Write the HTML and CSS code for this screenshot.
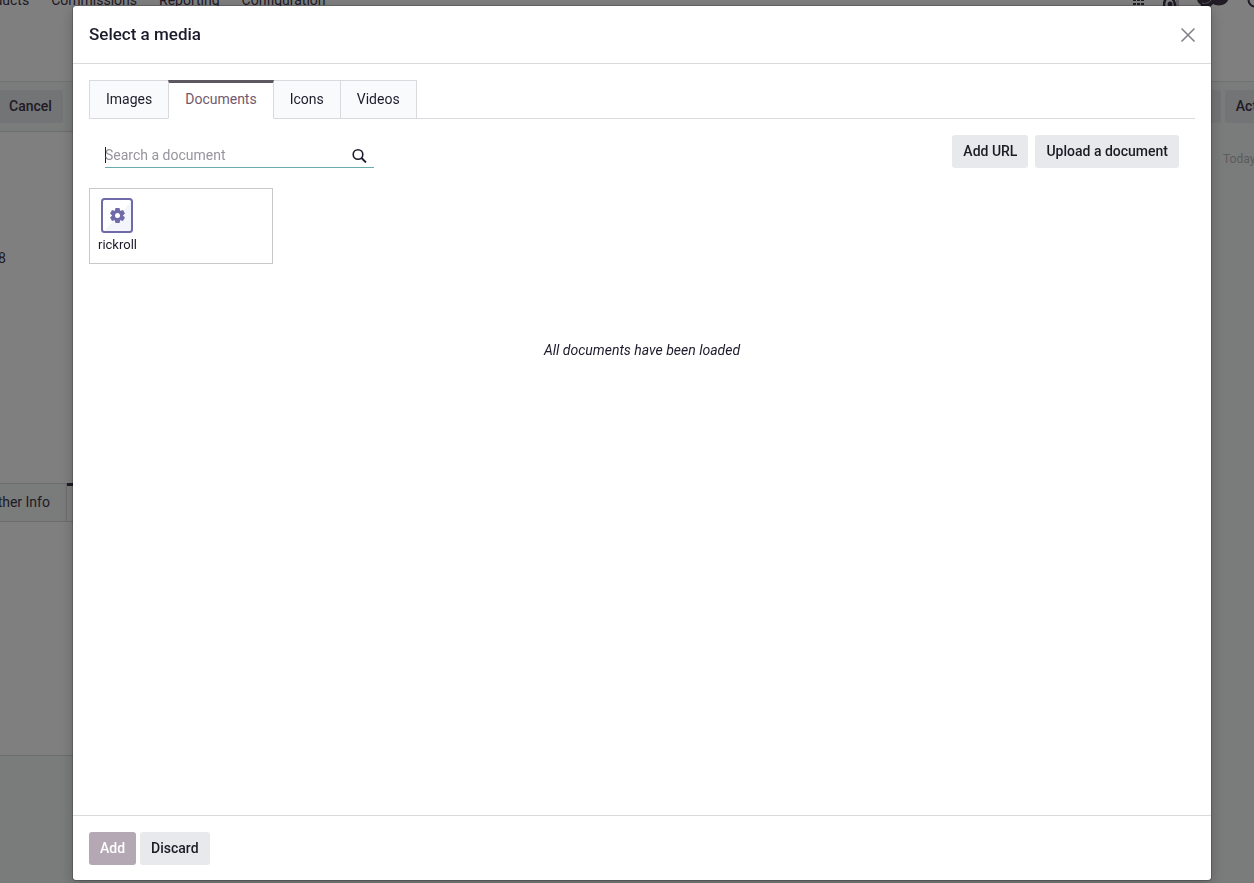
FILE: index.html
```html
<!DOCTYPE html>
<html lang="en">
<head>
  <meta charset="UTF-8">
  <meta name="viewport" content="width=device-width, initial-scale=1.0">
  <title>Select a media</title>
  <link rel="stylesheet" href="styles.css">
</head>
<body>

  <div class="page">
    <nav class="navbar">
      <a href="#">Products</a>
      <a href="#">Commissions</a>
      <a href="#">Reporting</a>
      <a href="#">Configuration</a>
      <div class="systray">
        <svg width="12" height="14" viewBox="0 0 12 14"><path d="M0 1h3v2H0zM4 1h3v2H4zM8 1h3v2H8zM0 4h3v2H0zM4 4h3v2H4zM8 4h3v2H8zM0 7h3v1H0zM4 7h3v1H4zM8 7h3v1H8zM0 10h3v2H0zM4 10h3v2H4zM8 10h3v2H8z"/></svg>
        <svg width="16" height="16" viewBox="0 0 16 16"><path d="M1 14c0-5 2-9 5-9s6 4 6 9" fill="none" stroke="currentColor" stroke-width="2.500"/><circle cx="7" cy="12" r="2.500"/><path d="M13 0h3v16h-3z" opacity=".3"/></svg>
        <svg width="32" height="18" viewBox="0 0 32 18"><path d="M0 7h31c1 3-2 6-6 7-4 1-7 0-9-1-2 3-6 4-9 3l-4 2 1-4C1 12 0 10 0 7z"/><path d="M5 12c3 1 7 0 9-3" fill="none" stroke="#aaa" stroke-width="1"/></svg>
        <svg width="16" height="16" viewBox="0 0 16 16"><circle cx="8" cy="8" r="6.500" fill="none" stroke="currentColor" stroke-width="2"/><path d="M8 4v4h3" fill="none" stroke="currentColor" stroke-width="2"/></svg>
      </div>
    </nav>
    <div class="control-panel"></div>
    <div class="form-view">
      <div class="form-main">
        <div class="statusbar">
          <button type="button" class="btn btn-secondary">Cancel</button>
        </div>
        <div class="sheet">
          <div class="field">8</div>
          <div class="sheet-tabs">
            <a href="#" class="sheet-tab">Other Info</a>
            <a href="#" class="sheet-tab active">Notes</a>
          </div>
        </div>
      </div>
      <div class="chatter">
        <div class="chatter-buttons">
          <button type="button" class="btn btn-secondary">Log note</button>
          <button type="button" class="btn btn-secondary">Activities</button>
        </div>
        <div class="chatter-date">Today</div>
      </div>
    </div>
  </div>

  <div class="backdrop">
    <div class="modal" role="dialog" aria-labelledby="modalTitle">
      <header class="modal-header">
        <h4 id="modalTitle">Select a media</h4>
        <button type="button" class="btn-close" aria-label="Close">
          <svg width="14" height="14" viewBox="0 0 14 14"><path d="M.5.5l13 13M13.500.5l-13 13" fill="none" stroke="currentColor" stroke-width="1.500"/></svg>
        </button>
      </header>

      <main class="modal-body">
        <div class="tabs">
          <a href="#" class="tab">Images</a>
          <a href="#" class="tab active">Documents</a>
          <a href="#" class="tab">Icons</a>
          <a href="#" class="tab">Videos</a>
        </div>

        <div class="toolbar">
          <div class="search">
            <input type="text" placeholder="Search a document" aria-label="Search a document">
            <svg width="15" height="15" viewBox="0 0 15 15"><circle cx="6" cy="6.500" r="4.800" fill="none" stroke="currentColor" stroke-width="1.600"/><path d="M9.500 10l4.500 4.500" fill="none" stroke="currentColor" stroke-width="1.800"/></svg>
          </div>
          <div class="toolbar-buttons">
            <button type="button" class="btn btn-secondary">Add URL</button>
            <button type="button" class="btn btn-secondary">Upload a document</button>
          </div>
        </div>

        <div class="documents">
          <div class="document">
            <svg width="32" height="35" viewBox="0 0 32 35">
              <rect x="1" y="1" width="30" height="33" rx="2" fill="#fff"/>
              <path d="M30 4v29H3z" fill="#f3f5fa"/>
              <rect x="1" y="1" width="30" height="33" rx="2.500" fill="none" stroke="#6f6ba8" stroke-width="2"/>
              <g fill="#6f6ba8">
                <path d="M14.500 10h4l1 4v7l-1 4h-4l-1-4v-7z"/>
                <path d="M14.500 10h4l1 4v7l-1 4h-4l-1-4v-7z" transform="rotate(60 16.500 17.500)"/>
                <path d="M14.500 10h4l1 4v7l-1 4h-4l-1-4v-7z" transform="rotate(120 16.500 17.500)"/>
                <circle cx="16.500" cy="17.500" r="5.200"/>
              </g>
              <circle cx="16.500" cy="17.500" r="2.500" fill="#fff"/>
            </svg>
            <span>rickroll</span>
          </div>
        </div>

        <p class="loaded">All documents have been loaded</p>
      </main>

      <footer class="modal-footer">
        <button type="button" class="btn btn-primary" disabled>Add</button>
        <button type="button" class="btn btn-secondary">Discard</button>
      </footer>
    </div>
  </div>

</body>
</html>
```
FILE: styles.css
```css
* {
  box-sizing: border-box;
}
body {
  margin: 0;
  height: 100vh;
  overflow: hidden;
  font-family: Roboto, "Liberation Sans", sans-serif;
  font-size: 14px;
  line-height: 21px;
  color: #1c1b2b;
  background-color: #fff;
}
a {
  color: inherit;
  text-decoration: none;
}
.btn {
  padding: 5px 10px;
  border: 1px solid transparent;
  border-radius: 3px;
  font-family: inherit;
  font-size: 14px;
  font-weight: 500;
  line-height: 21px;
  white-space: nowrap;
  cursor: pointer;
}
.btn-secondary {
  background-color: #e7e9ed;
  color: #1c1b24;
}
.btn-primary {
  background-color: #b3a8b4;
  color: #fff;
}

/* page behind the dialog, scrolled a little */
.page {
  display: flex;
  flex-direction: column;
  height: calc(100vh + 24px);
  margin: -24px 0 0 -31px;
  color: #40364a;
}
.page .btn-secondary {
  color: #40364a;
}
.navbar {
  display: flex;
  align-items: center;
  gap: 22px;
  height: 46px;
  padding: 2px 0 0 4px;
}
.systray {
  display: flex;
  align-items: center;
  gap: 18px;
  margin-left: auto;
  margin-right: -9px;
  fill: currentColor;
}
.control-panel {
  height: 60px;
  border-bottom: 1px solid #e0e3e3;
}
.form-view {
  flex: 1;
  display: flex;
  min-height: 0;
  background-color: #f4f7f6;
}
.form-main {
  flex: 1;
}
.statusbar {
  padding: 8px 29px;
  height: 50px;
  border-bottom: 1px solid #d8dadd;
}
.sheet {
  height: 624px;
  background-color: #fff;
  border-bottom: 1px solid #d8dadd;
}
.field {
  height: 351px;
  padding: 116px 29px 0;
}
.sheet-tabs {
  display: flex;
  height: 39px;
  padding-left: 2px;
  border-bottom: 1px solid #d8dadd;
}
.sheet-tab {
  padding: 8px 16px;
  border: 1px solid #d8dadd;
  border-width: 1px 1px 0;
  background-color: #f4f7f6;
}
.sheet-tab.active {
  border-top: 3px solid #40364a;
  border-left: none;
  background-color: #fff;
}
.chatter {
  width: 110px;
  overflow: hidden;
}
.chatter-buttons {
  display: flex;
  gap: 4px;
  padding: 8px 0;
}
.chatter-date {
  padding: 18px 79px;
  font-size: 12px;
  color: #b4b6ba;
}

/* dialog */
.backdrop {
  position: fixed;
  inset: 0;
  display: flex;
  padding: 5px 42px 2px 72px;
  background-color: rgba(0, 0, 0, 0.5);
}
.modal {
  flex: 1;
  display: flex;
  flex-direction: column;
  background-color: #fff;
  background-clip: padding-box;
  border: 1px solid rgba(0, 0, 0, 0.2);
  border-radius: 4px;
  box-shadow: 0 4px 14px rgba(0, 0, 0, 0.2);
}
.modal-header {
  display: flex;
  align-items: center;
  justify-content: space-between;
  height: 58px;
  padding: 0 16px;
  border-bottom: 1px solid #d8dadd;
}
.modal-header h4 {
  margin: 0;
  font-size: 17px;
  font-weight: 500;
}
.btn-close {
  display: flex;
  padding: 0;
  border: none;
  background: none;
  color: #807e86;
  cursor: pointer;
}
.modal-body {
  flex: 1;
  padding: 16px;
}
.tabs {
  display: flex;
  border-bottom: 1px solid #d8dadd;
}
.tab {
  height: 39px;
  margin-bottom: -1px;
  padding: 8px 16px;
  border: 1px solid #d8dadd;
  background-color: #f9fafb;
}
.tab + .tab {
  margin-left: -1px;
}
.tab.active {
  z-index: 1;
  padding-top: 6px;
  border-top: 3px solid #5d585f;
  border-bottom-color: #fff;
  background-color: #fff;
  color: #71586e;
}
.toolbar {
  display: flex;
  justify-content: space-between;
  padding: 16px 16px 20px;
}
.search {
  display: flex;
  align-items: center;
  width: 269px;
  padding: 8px 7px 0 0;
  border-bottom: 1px solid #6aabab;
}
/* text cursor */
.search::before {
  content: "";
  width: 1px;
  height: 16px;
  margin-right: -1px;
  background-color: #1c1b24;
}
.search input {
  flex: 1;
  min-width: 0;
  padding: 0;
  border: none;
  outline: none;
  background: none;
  font-family: inherit;
  font-size: 14px;
  line-height: 21px;
  color: inherit;
}
.search input::placeholder {
  color: #97949c;
}
.toolbar-buttons {
  display: flex;
  gap: 7px;
}
.documents {
  display: grid;
  grid-template-columns: repeat(auto-fill, 184px);
}
.document {
  display: flex;
  flex-direction: column;
  align-items: flex-start;
  gap: 1px;
  height: 76px;
  padding: 9px 8px 8px;
  border: 1px solid #c8c9cb;
  font-size: 13px;
}
.document svg {
  flex-shrink: 0;
  margin-left: 3px;
}
.loaded {
  margin: 76px 0 0;
  font-style: italic;
  text-align: center;
}
.modal-footer {
  display: flex;
  align-items: center;
  gap: 4px;
  height: 65px;
  padding: 0 16px;
  border-top: 1px solid #d8dadd;
}
```
